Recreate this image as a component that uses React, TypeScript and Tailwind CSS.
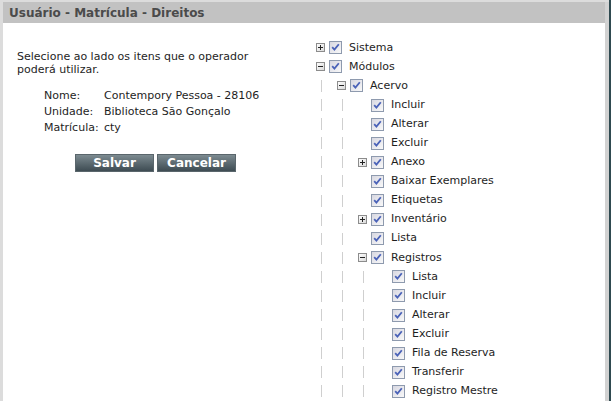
import React from "react";

type Node = { level: number; exp?: "plus" | "minus"; label: string };

const tree: Node[] = [
  { level: 0, exp: "plus", label: "Sistema" },
  { level: 0, exp: "minus", label: "Módulos" },
  { level: 1, exp: "minus", label: "Acervo" },
  { level: 2, label: "Incluir" },
  { level: 2, label: "Alterar" },
  { level: 2, label: "Excluir" },
  { level: 2, exp: "plus", label: "Anexo" },
  { level: 2, label: "Baixar Exemplares" },
  { level: 2, label: "Etiquetas" },
  { level: 2, exp: "plus", label: "Inventário" },
  { level: 2, label: "Lista" },
  { level: 2, exp: "minus", label: "Registros" },
  { level: 3, label: "Lista" },
  { level: 3, label: "Incluir" },
  { level: 3, label: "Alterar" },
  { level: 3, label: "Excluir" },
  { level: 3, label: "Fila de Reserva" },
  { level: 3, label: "Transferir" },
  { level: 3, label: "Registro Mestre" },
];

function Expander({ kind }: { kind: "plus" | "minus" }) {
  return (
    <svg width="9" height="9" viewBox="0 0 9 9">
      <defs>
        <linearGradient id="exg" x1="0" y1="0" x2="1" y2="1">
          <stop offset="0" stopColor="#ffffff" />
          <stop offset="1" stopColor="#d8d8d8" />
        </linearGradient>
      </defs>
      <rect x="0.5" y="0.5" width="8" height="8" fill="url(#exg)" stroke="#8c8c8c" />
      <path d="M2 4.5H7" stroke="#222" strokeWidth="1" />
      {kind === "plus" && <path d="M4.5 2V7" stroke="#222" strokeWidth="1" />}
    </svg>
  );
}

function Checkbox() {
  return (
    <svg width="13" height="13" viewBox="0 0 13 13">
      <defs>
        <linearGradient id="cbg" x1="0" y1="0" x2="1" y2="1">
          <stop offset="0" stopColor="#d6d6e0" />
          <stop offset="1" stopColor="#fafafa" />
        </linearGradient>
      </defs>
      <rect x="0.5" y="0.5" width="12" height="12" fill="url(#cbg)" stroke="#8e9aae" />
      <path d="M3.2 6.2L5.4 8.6L9.8 3.2" fill="none" stroke="#4a62b8" strokeWidth="1.8" />
    </svg>
  );
}

function TreeRow({ node }: { node: Node }) {
  return (
    <div className="flex h-[19.1px] items-center">
      {Array.from({ length: node.level }).map((_, i) => (
        <div key={i} className="flex h-full w-[21px] items-center">
          <div className="ml-[5px] h-[12px] w-px bg-[#cfcfcf]" />
        </div>
      ))}
      <div className="flex w-[13px] items-center">{node.exp && <Expander kind={node.exp} />}</div>
      <Checkbox />
      <span className="ml-[7px] whitespace-nowrap">{node.label}</span>
    </div>
  );
}

export default function App() {
  return (
    <div
      className="flex h-[401px] w-[611px] overflow-hidden bg-[#dcdcdc] text-[11px] text-[#1e1e1e]"
      style={{ fontFamily: '"DejaVu Sans", Verdana, sans-serif' }}
    >
      <div className="flex flex-1 flex-col pl-[3px] pt-[2px]">
        <div className="flex h-[24px] items-center bg-[#c2c2c2] pl-[6px] text-[12px] font-bold text-[#4b4b4b]">
          Usuário - Matrícula - Direitos
        </div>
        <div className="flex flex-1 bg-white">
          <div className="w-[313px] pl-[14px] pt-[27px]">
            <p className="leading-[13px]">
              Selecione ao lado os itens que o operador
              <br />
              poderá utilizar.
            </p>
            <div className="mt-[12px] pl-[27px] leading-[16px]">
              <div className="flex">
                <span className="w-[60px]">Nome:</span>
                <span>Contempory Pessoa - 28106</span>
              </div>
              <div className="flex">
                <span className="w-[60px]">Unidade:</span>
                <span>Biblioteca São Gonçalo</span>
              </div>
              <div className="flex">
                <span className="w-[60px]">Matrícula:</span>
                <span>cty</span>
              </div>
            </div>
            <div className="mt-[18px] flex gap-[3px] pl-[58px]">
              <button className="h-[18px] w-[79px] border border-[#5a666c] bg-gradient-to-b from-[#7d8b91] to-[#3e4c53] text-[12px] font-bold leading-none text-white">
                Salvar
              </button>
              <button className="h-[18px] w-[79px] border border-[#5a666c] bg-gradient-to-b from-[#7d8b91] to-[#3e4c53] text-[12px] font-bold leading-none text-white">
                Cancelar
              </button>
            </div>
          </div>
          <div className="pt-[15px]">
            {tree.map((n, i) => (
              <TreeRow key={i} node={n} />
            ))}
          </div>
        </div>
      </div>
      <div className="mt-[2px] w-[4px] bg-[#d2d2d2]" />
      <div className="w-[2px] bg-[#2f4a50]" />
    </div>
  );
}
